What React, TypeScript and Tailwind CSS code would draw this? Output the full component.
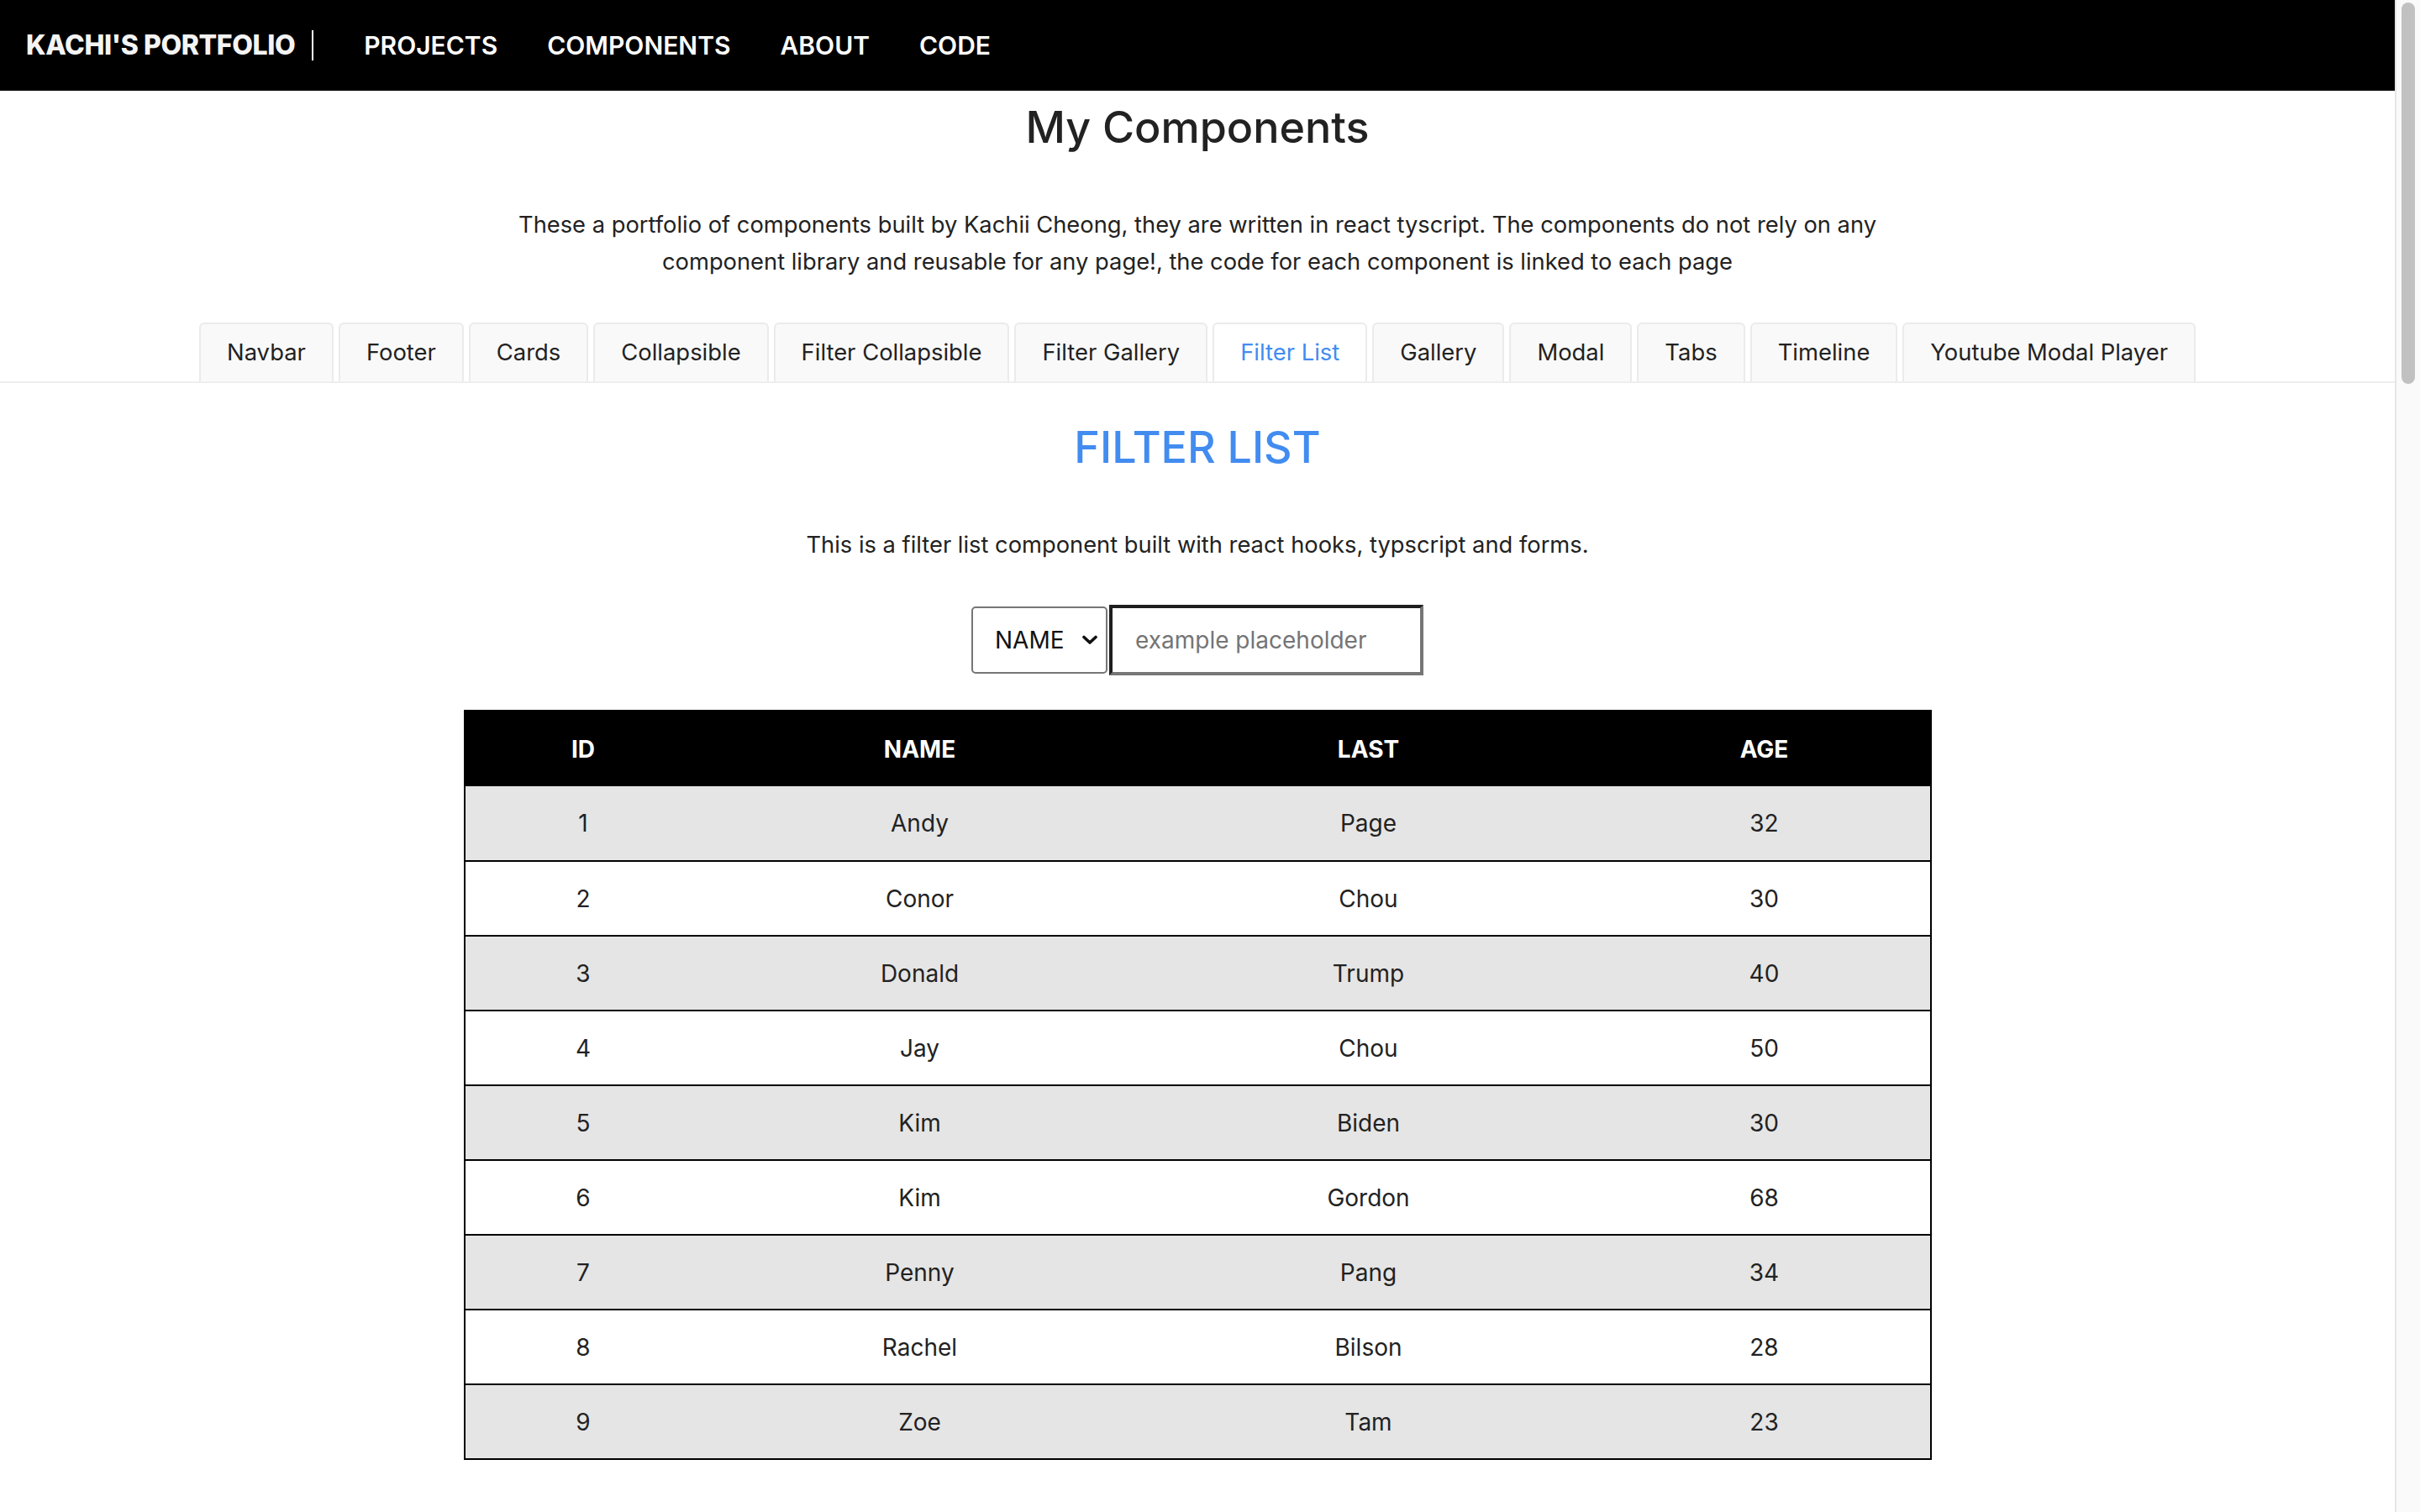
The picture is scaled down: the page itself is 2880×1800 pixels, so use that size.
import React, { useState } from "react";

type Person = { id: number; name: string; last: string; age: number };

const people: Person[] = [
  { id: 1, name: "Andy", last: "Page", age: 32 },
  { id: 2, name: "Conor", last: "Chou", age: 30 },
  { id: 3, name: "Donald", last: "Trump", age: 40 },
  { id: 4, name: "Jay", last: "Chou", age: 50 },
  { id: 5, name: "Kim", last: "Biden", age: 30 },
  { id: 6, name: "Kim", last: "Gordon", age: 68 },
  { id: 7, name: "Penny", last: "Pang", age: 34 },
  { id: 8, name: "Rachel", last: "Bilson", age: 28 },
  { id: 9, name: "Zoe", last: "Tam", age: 23 },
];

const tabs = [
  "Navbar",
  "Footer",
  "Cards",
  "Collapsible",
  "Filter Collapsible",
  "Filter Gallery",
  "Filter List",
  "Gallery",
  "Modal",
  "Tabs",
  "Timeline",
  "Youtube Modal Player",
];

const navLinks = ["PROJECTS", "COMPONENTS", "ABOUT", "CODE"];

function Navbar() {
  return (
    <nav className="h-[108px] bg-black flex items-center pl-[31px] shrink-0">
      <span className="text-[32px] font-extrabold text-[#f4f4f4] tracking-[-0.4px]">KACHI'S PORTFOLIO</span>
      <div className="w-[2px] h-[36px] bg-white ml-[20px]"></div>
      <ul className="flex items-center gap-[59px] ml-[60px]">
        {navLinks.map((link) => (
          <li key={link} className="text-[30px] font-semibold text-white">
            {link}
          </li>
        ))}
      </ul>
    </nav>
  );
}

function FilterList() {
  const [field, setField] = useState<"name" | "last" | "age">("name");
  const [query, setQuery] = useState("");

  const rows = people.filter((p) =>
    String(p[field]).toLowerCase().includes(query.toLowerCase())
  );

  return (
    <section className="flex flex-col items-center">
      <h2 className="mt-[45px] text-[52px] leading-[64px] font-medium text-[#428cf0]">FILTER LIST</h2>
      <p className="mt-[62px] text-[27.3px] leading-[44px] text-[#222]">
        This is a filter list component built with react hooks, typscript and forms.
      </p>

      {/* select + input */}
      <div className="mt-[49px] flex items-center gap-[2px]">
        <div className="h-[80px] w-[162px] border-2 border-[#767676] rounded-[5px] flex items-center pl-[26px] pr-[10px] bg-white">
          <select
            value={field}
            onChange={(e) => setField(e.target.value as "name" | "last" | "age")}
            className="appearance-none bg-transparent outline-none text-[28px] text-[#111] flex-1 min-w-0"
          >
            <option value="name">NAME</option>
            <option value="last">LAST</option>
            <option value="age">AGE</option>
          </select>
          <svg width="18" height="12" viewBox="0 0 18 12" className="shrink-0">
            <path d="M2 2.5 L9 9 L16 2.5" fill="none" stroke="#111" strokeWidth="3.6" strokeLinecap="round" strokeLinejoin="round" />
          </svg>
        </div>
        <input
          value={query}
          onChange={(e) => setQuery(e.target.value)}
          placeholder="example placeholder"
          className="h-[84px] w-[374px] border-[4px] border-t-[#1e1e1e] border-l-[#1e1e1e] border-r-[#767676] border-b-[#767676] pl-[27px] text-[28px] text-[#111] placeholder:text-[#757575] outline-none bg-white"
        />
      </div>

      <table className="mt-[41px] w-[1745px] table-fixed border-collapse border-2 border-black text-[28px]">
        <colgroup>
          <col className="w-[282px]" />
          <col className="w-[520px]" />
          <col className="w-[548px]" />
          <col className="w-[395px]" />
        </colgroup>
        <thead>
          <tr className="h-[90px] bg-black text-white">
            <th className="font-bold">ID</th>
            <th className="font-bold">NAME</th>
            <th className="font-bold">LAST</th>
            <th className="font-bold">AGE</th>
          </tr>
        </thead>
        <tbody>
          {rows.map((p, i) => (
            <tr
              key={p.id}
              className={
                i % 2 === 0
                  ? "h-[89px] bg-[#e5e5e5] border-b-2 border-black text-[#222] text-center"
                  : "h-[89px] bg-white border-b-2 border-black text-[#222] text-center"
              }
            >
              <td>{p.id}</td>
              <td>{p.name}</td>
              <td>{p.last}</td>
              <td>{p.age}</td>
            </tr>
          ))}
        </tbody>
      </table>
    </section>
  );
}

export default function App() {
  const [active, setActive] = useState("Filter List");

  return (
    <div className="flex h-screen w-full overflow-hidden bg-white font-['Inter',sans-serif]">
      <main className="flex-1 min-w-0 flex flex-col">
        <Navbar />

        {/* header */}
        <h1 className="mt-[10px] text-center text-[52px] leading-[68px] font-medium text-[#222]">My Components</h1>
        <p className="mt-[60px] mx-auto max-w-[1660px] text-center text-[27.3px] leading-[44px] text-[#222]">
          These a portfolio of components built by Kachii Cheong, they are written in react tyscript. The components do
          not rely on any component library and reusable for any page!, the code for each component is linked to each
          page
        </p>

        {/* tabs */}
        <div className="mt-[50px] flex justify-center gap-[6px] border-b-2 border-[#eeeeee]">
          {tabs.map((tab) => (
            <button
              key={tab}
              onClick={() => setActive(tab)}
              className={
                tab === active
                  ? "h-[70px] px-[31px] -mb-[2px] border-2 border-b-0 border-[#ebebeb] rounded-t-[6px] bg-white text-[27.4px] text-[#428cf0]"
                  : "h-[70px] px-[31px] border-2 border-b-0 border-[#ebebeb] rounded-t-[6px] bg-[#f9f9f9] text-[27.4px] text-[#222]"
              }
            >
              {tab}
            </button>
          ))}
        </div>

        <FilterList />
      </main>

      {/* scrollbar strip */}
      <aside className="w-[30px] shrink-0 bg-[#fafafa] border-l-2 border-[#e6e6e6] pl-[6px] pt-[3px]">
        <div className="w-[16px] h-[454px] rounded-full bg-[#c1c1c1]"></div>
      </aside>
    </div>
  );
}
